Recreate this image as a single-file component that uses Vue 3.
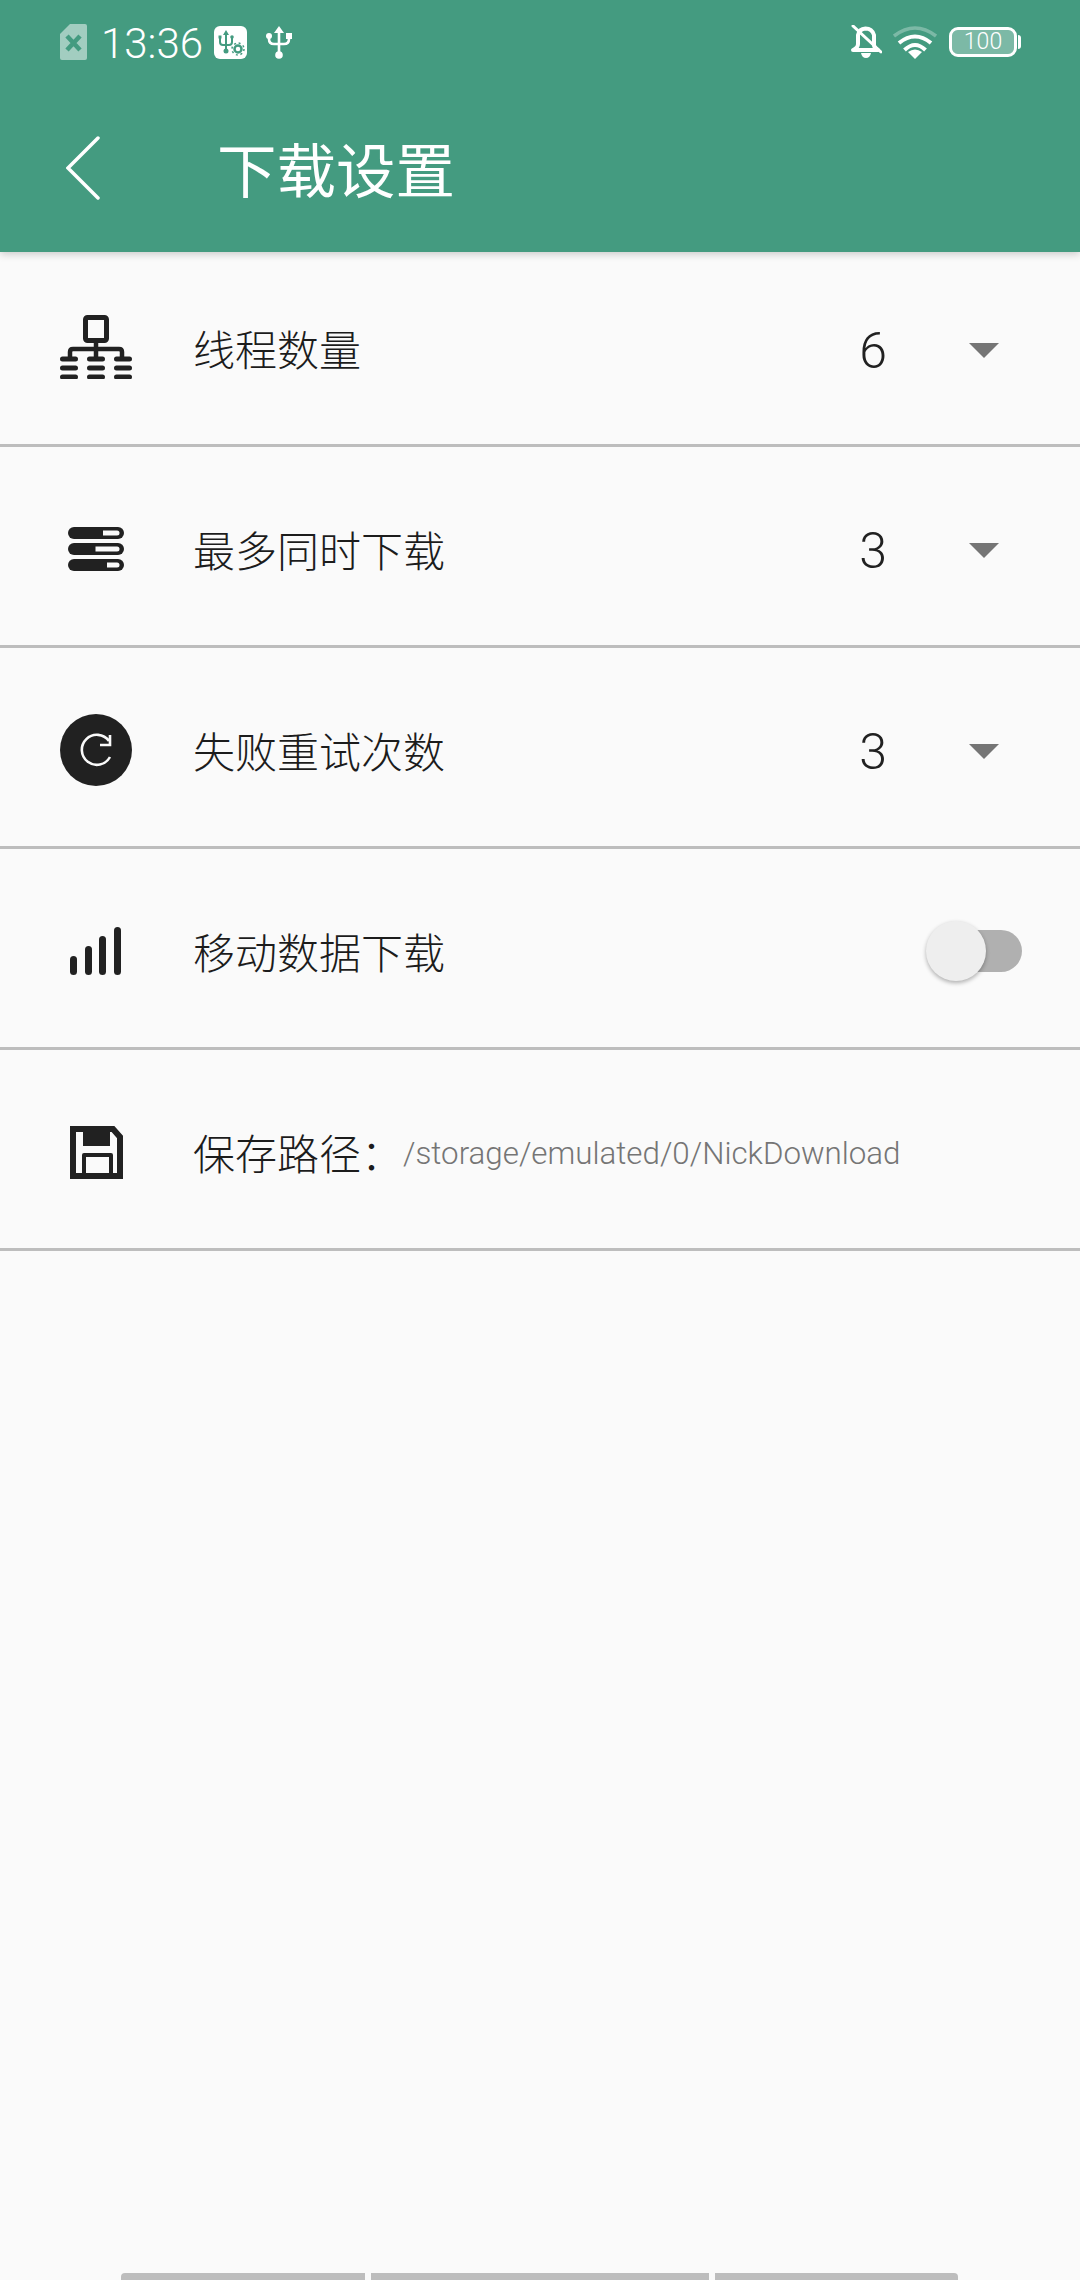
<script setup>
const selects = [
  { label: '线程数量', value: 6, icon: 'tree' },
  { label: '最多同时下载', value: 3, icon: 'stack' },
  { label: '失败重试次数', value: 3, icon: 'retry' }
]
</script>

<template>
  <div class="page">
    <header class="header">
      <div class="status">
        <svg class="sim" width="27" height="36" viewBox="0 0 27 36">
          <path d="M10 0H25a2 2 0 0 1 2 2V34a2 2 0 0 1-2 2H2a2 2 0 0 1-2-2V10Z" fill="#fff" fill-opacity=".5" />
          <path d="M7 12L20 26M20 12L7 26" stroke="#449b80" stroke-width="4.500" fill="none" />
        </svg>
        <span class="time">13:36</span>
        <svg class="usb-box" width="33" height="33" viewBox="0 0 33 33">
          <rect width="33" height="33" rx="6" fill="#fff" />
          <g stroke="#449b80" fill="none" stroke-width="2">
            <path d="M12 7V25M6 12V16Q6 19 9 19H15Q18 19 18 16V12" />
            <circle cx="24" cy="23" r="3.500" stroke-width="2.500" />
            <circle cx="24" cy="23" r="6" stroke-width="1.500" stroke-dasharray="2 2.700" />
          </g>
          <path d="M12 4L15 9H9Z" fill="#449b80" />
          <circle cx="12" cy="25" r="2.500" fill="#449b80" />
          <rect x="4.500" y="9.500" width="3" height="3" fill="#449b80" />
          <circle cx="18" cy="11" r="1.800" fill="#449b80" />
        </svg>
        <svg class="usb" width="26" height="33" viewBox="0 0 26 33">
          <g stroke="#fff" fill="none" stroke-width="2.600">
            <path d="M13 6V28M3 11V13Q3 18 8 18H18Q23 18 23 13V11" />
          </g>
          <path d="M13 0L18 7H8Z" fill="#fff" />
          <circle cx="13" cy="29" r="3.800" fill="#fff" />
          <circle cx="3" cy="10" r="3" fill="#fff" />
          <rect x="20" y="7" width="6" height="6" fill="#fff" />
        </svg>
        <div class="status-right">
          <svg width="31" height="34" viewBox="0 0 31 34">
            <g stroke="#fff" fill="none" stroke-width="4" stroke-linecap="round" stroke-linejoin="round">
              <path d="M7 10Q8 4 14.500 3.500Q21 3.500 23 10V20Q23 23 27 25H2Q7 23 7 19Z" />
              <path d="M2 1L30 27" stroke-width="3" />
            </g>
            <path d="M10 28H20Q19 33 15 33Q11 33 10 28Z" fill="#fff" />
          </svg>
          <svg class="wifi" width="44" height="33" viewBox="0 0 44 33">
            <path d="M1 10Q22 -6 43 10" stroke="#fff" stroke-opacity=".3" stroke-width="3.500" fill="none" />
            <path d="M6 17Q22 4 38 17" stroke="#fff" stroke-width="4" fill="none" />
            <path d="M11.500 24Q22 14 32.500 24" stroke="#fff" stroke-width="4" fill="none" />
            <path d="M15 26Q22 21 29 26L22 33Z" fill="#fff" />
          </svg>
          <div class="battery">
            <span class="battery-level">100</span>
            <i class="battery-nub"></i>
          </div>
        </div>
      </div>
      <div class="toolbar">
        <svg class="back" width="34" height="64" viewBox="0 0 34 64">
          <path d="M32 2L2 32L32 62" stroke="#fff" stroke-width="3.500" stroke-linecap="round" fill="none" />
        </svg>
        <h1 class="title">下载设置</h1>
      </div>
    </header>

    <ul class="list">
      <li v-for="item in selects" :key="item.label" class="row">
        <span class="row-icon">
          <svg v-if="item.icon === 'tree'" class="tree" width="72" height="64" viewBox="0 0 72 64">
            <g stroke="#212121" fill="none" stroke-width="5">
              <rect x="25.500" y="2.500" width="21" height="23" rx="2" />
              <path d="M36 26V42M10 42V37Q10 34 13 34H59Q62 34 62 37V42" stroke-width="4.500" />
            </g>
            <g stroke="#212121" stroke-width="5" stroke-linecap="round">
              <path d="M2.500 44H15.500M29.500 44H42.500M56.500 44H69.500" />
              <path d="M2.500 53H15.500M29.500 53H42.500M56.500 53H69.500" />
              <path d="M2.500 62H15.500M29.500 62H42.500M56.500 62H69.500" />
            </g>
          </svg>
          <svg v-else-if="item.icon === 'stack'" width="56" height="44" viewBox="0 0 56 44">
            <rect y="0" width="56" height="12" rx="6" fill="#212121" />
            <rect y="16" width="56" height="12" rx="6" fill="#212121" />
            <rect y="32" width="56" height="12" rx="6" fill="#212121" />
            <path d="M35 3.500H49a2.500 2.500 0 0 1 0 5H35Z" fill="#fafafa" />
            <path d="M27.500 19.500H49a2.500 2.500 0 0 1 0 5H27.500Z" fill="#fafafa" />
            <path d="M39 35.500H49a2.500 2.500 0 0 1 0 5H39Z" fill="#fafafa" />
          </svg>
          <svg v-else width="72" height="72" viewBox="0 0 72 72">
            <circle cx="36" cy="36" r="36" fill="#212121" />
            <path d="M49 27A15 15 0 1 0 50 43" stroke="#fafafa" stroke-width="2.600" fill="none" />
            <path d="M50 21V31H40" stroke="#fafafa" stroke-width="2.600" fill="none" />
          </svg>
        </span>
        <span class="label">{{ item.label }}</span>
        <span class="value">{{ item.value }}</span>
        <i class="caret"></i>
      </li>

      <li class="row">
        <span class="row-icon">
          <svg width="52" height="48" viewBox="0 0 52 48">
            <rect x="0" y="29" width="7" height="19" rx="3.500" fill="#212121" />
            <rect x="15" y="19" width="7" height="29" rx="3.500" fill="#212121" />
            <rect x="29" y="9" width="7" height="39" rx="3.500" fill="#212121" />
            <rect x="44" y="0" width="7" height="48" rx="3.500" fill="#212121" />
          </svg>
        </span>
        <span class="label">移动数据下载</span>
        <span class="switch"><i class="knob"></i></span>
      </li>

      <li class="row">
        <span class="row-icon">
          <svg width="53" height="53" viewBox="0 0 53 53">
            <path d="M3 3H43L50 11V50H3Z" fill="none" stroke="#212121" stroke-width="6" />
            <rect x="13" y="0" width="27" height="20" fill="#212121" />
            <path d="M14 50V29H41V50" fill="none" stroke="#212121" stroke-width="4" stroke-linejoin="round" />
          </svg>
        </span>
        <span class="label">保存路径：</span>
        <span class="path">/storage/emulated/0/NickDownload</span>
      </li>
    </ul>

    <div class="scrollbar">
      <i class="seg seg-a"></i>
      <i class="seg seg-b"></i>
      <i class="seg seg-c"></i>
    </div>
  </div>
</template>

<style>
html,
body {
  margin: 0;
  background: #fafafa;
}
</style>

<style scoped>
.page {
  width: 1080px;
  height: 2280px;
  display: flex;
  flex-direction: column;
  overflow: hidden;
  background: #fafafa;
  font-family: Roboto, "Noto Sans CJK SC", sans-serif;
}

.header {
  height: 252px;
  flex: none;
  background: #449b80;
  box-shadow: 0 2px 8px rgba(0, 0, 0, 0.2);
  position: relative;
  z-index: 1;
}

.status {
  height: 84px;
  display: flex;
  align-items: center;
  padding: 0 63px 0 60px;
  color: #fff;
}

.sim {
  margin-right: 14px;
}

.time {
  font-size: 42px;
  font-weight: 300;
  line-height: 1;
  width: 100px;
  margin: 3px 13px 0 0;
}

.usb {
  margin-left: 19px;
}

.status-right {
  margin-left: auto;
  display: flex;
  align-items: center;
}

.wifi {
  margin-left: 11px;
}

.battery {
  width: 62px;
  height: 24px;
  margin-left: 12px;
  border: 3.500px solid #fff;
  border-radius: 9px;
  position: relative;
  text-align: center;
  background: rgba(255, 255, 255, 0.3);
  background-clip: content-box;
}

.battery-level {
  display: block;
  font-size: 23px;
  font-weight: 300;
  line-height: 24px;
}

.battery-nub {
  position: absolute;
  right: -6.500px;
  top: 5px;
  width: 3px;
  height: 14px;
  background: #fff;
  border-radius: 0 3px 3px 0;
}

.toolbar {
  height: 168px;
  display: flex;
  align-items: center;
  padding-left: 66px;
}

.title {
  margin: 0 0 0 117px;
  font-family: "Noto Sans CJK SC", sans-serif;
  font-size: 59.500px;
  font-weight: 400;
  color: #fff;
  line-height: 1;
}

.list {
  list-style: none;
  margin: 0;
  padding: 0;
}

.row {
  height: 192px;
  padding: 6px 0 0 60px;
  border-bottom: 3px solid #bdbdbd;
  display: flex;
  align-items: center;
}

.row:first-child {
  height: 189px;
  padding-top: 3px;
}

.row:first-child .label {
  margin-top: -3px;
}

.row-icon {
  width: 72px;
  height: 72px;
  flex: none;
  display: flex;
  align-items: center;
  justify-content: center;
}

.tree {
  margin-top: -6px;
}

.label {
  margin-left: 61px;
  font-family: "Noto Sans CJK SC", sans-serif;
  font-size: 42px;
  font-weight: 300;
  color: #1c1c1c;
  line-height: 1;
}

.value {
  margin: 3px 0 0 auto;
  width: 60px;
  text-align: center;
  font-size: 50px;
  font-weight: 300;
  color: #212121;
  line-height: 1;
}

.caret {
  margin: 2px 81px 0 66px;
  width: 0;
  height: 0;
  border-left: 15px solid transparent;
  border-right: 15px solid transparent;
  border-top: 15px solid #757575;
}

.switch {
  margin-left: auto;
  margin-right: 58px;
  width: 78px;
  height: 42px;
  border-radius: 21px;
  background: #b0b0b0;
  position: relative;
}

.knob {
  position: absolute;
  left: -18px;
  top: -9px;
  width: 60px;
  height: 60px;
  border-radius: 50%;
  background: #eeeeee;
  box-shadow: 0 2px 4px rgba(0, 0, 0, 0.3);
}

.path {
  margin: 4px 0 0 0;
  font-size: 31.300px;
  font-weight: 300;
  color: #757575;
  line-height: 1;
}

.scrollbar {
  margin-top: auto;
  height: 7px;
  display: flex;
  gap: 6px;
  padding-left: 121px;
}

.seg {
  height: 7px;
  background: #bdbdbd;
}

.seg-a {
  width: 244px;
  border-radius: 4px 0 0 0;
}

.seg-b {
  width: 338px;
}

.seg-c {
  width: 243px;
  border-radius: 0 4px 0 0;
}
</style>
